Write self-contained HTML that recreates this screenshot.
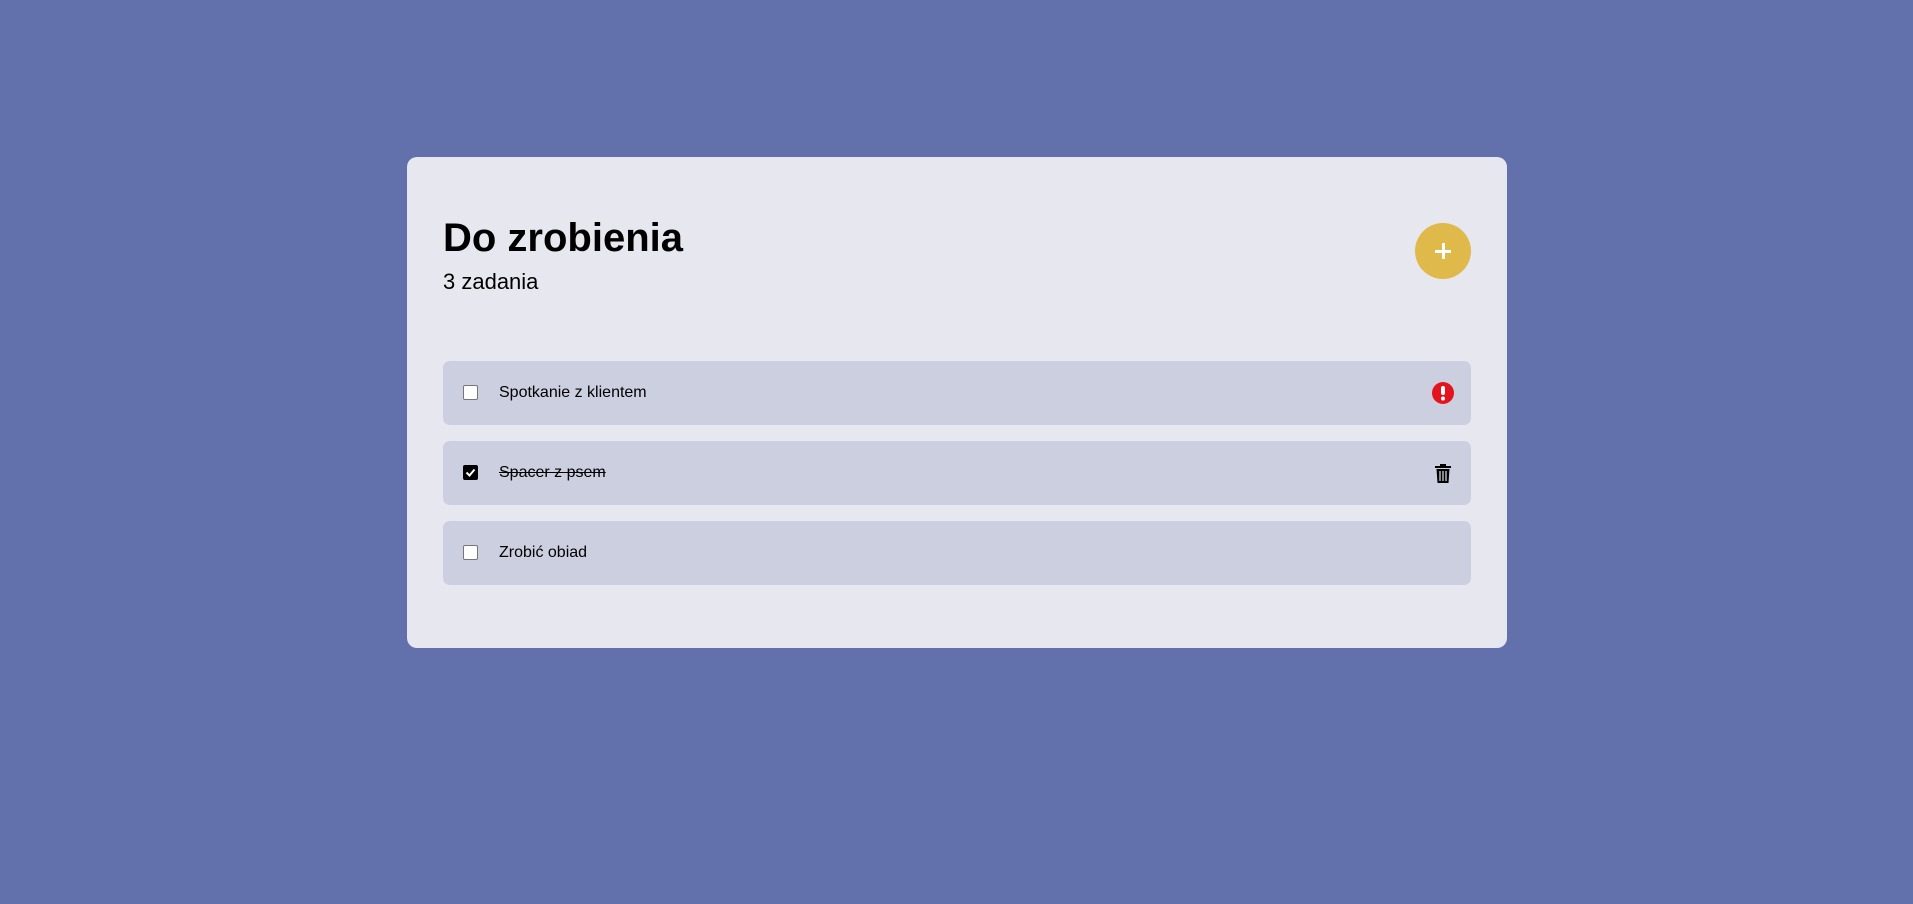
<!DOCTYPE html>
<html><head><style>
body{margin:0;width:1913px;height:904px;background:#6271ab;font-family:"Liberation Sans",Arial,sans-serif;position:relative;overflow:hidden}
.card{position:absolute;left:407px;top:157px;width:1100px;height:491px;background:#e7e7f0;border-radius:10px}
h1{position:absolute;left:36px;top:58px;margin:0;font-size:40px;font-weight:bold;line-height:46px;color:#000}
.sub{position:absolute;left:36px;top:112px;font-size:22px;color:#000;line-height:26px}
.add{position:absolute;left:1008px;top:66px;width:56px;height:56px;border-radius:50%;background:#dfb94a}
.add:before{content:"";position:absolute;left:20px;top:27px;width:16px;height:3px;background:#fff}
.add:after{content:"";position:absolute;left:26.5px;top:20px;width:3px;height:16px;background:#fff}
.item{position:absolute;left:36px;width:1028px;height:64px;background:#cccfe0;border-radius:7px}
.cb{position:absolute;left:20px;top:24px;width:13px;height:13px;border:1px solid #767676;border-radius:2px;background:#fff}
.cb.on{background:#000;border-color:#000}
.t{position:absolute;left:56px;top:22px;font-size:16px;line-height:20px;color:#000}
.ic{position:absolute;left:989px;top:21px}
</style></head><body>
<div class="card">
<h1>Do zrobienia</h1>
<div class="sub">3 zadania</div>
<div class="add"></div>
<div class="item" style="top:204px"><div class="cb"></div><div class="t">Spotkanie z klientem</div>
<svg class="ic" width="22" height="22" viewBox="0 0 22 22"><circle cx="11" cy="11" r="11" fill="#e3141b"/><rect x="9" y="4" width="4" height="9" rx="2" fill="#fff"/><circle cx="11" cy="16.5" r="2" fill="#fff"/></svg></div>
<div class="item" style="top:284px"><div class="cb on"><svg width="13" height="13" viewBox="0 0 13 13" style="position:absolute;left:0;top:0"><path d="M2.5 6.5l3 3 5-6" stroke="#fff" stroke-width="2" fill="none"/></svg></div><div class="t" style="text-decoration:line-through">Spacer z psem</div>
<svg class="ic" width="22" height="22" viewBox="0 0 22 22"><path d="M8 2h6v2h5v2H3V4h5z" fill="#000"/><path d="M4.5 7h13l-1 14h-11z" fill="#000"/><path d="M8 9v10M11 9v10M14 9v10" stroke="#cccfe0" stroke-width="1.3"/></svg></div>
<div class="item" style="top:364px"><div class="cb"></div><div class="t">Zrobić obiad</div></div>
</div>
</body></html>
